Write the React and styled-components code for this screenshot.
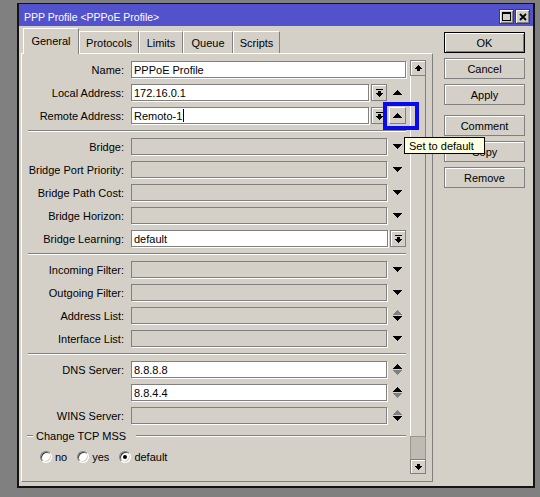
import React from 'react';
import styled, { createGlobalStyle } from 'styled-components';

const GlobalStyle = createGlobalStyle`
  html, body { margin: 0; padding: 0; background: #808080; }
  body { font-family: "Liberation Sans", Arial, sans-serif; font-size: 11px; color: #000; }
  * { box-sizing: border-box; }
`;

const Page = styled.div`
  width: 540px;
  height: 497px;
  padding: 3px 0 0 17px;
  background: #808080;
  overflow: hidden;
`;

const Window = styled.div`
  width: 518px;
  height: 485px;
  background: #d4d0c8;
  border: 2px solid #141414;
  border-top-width: 1px;
  display: flex;
  flex-direction: column;
`;

const TitleBar = styled.div`
  height: 22px;
  flex-shrink: 0;
  background: #5252cc;
  display: flex;
  align-items: center;
  justify-content: space-between;
  padding: 0 3px 0 5px;
`;

const TitleText = styled.span`
  color: #fff;
  font-size: 10.5px;
  margin-top: 3px;
`;

const TitleButtons = styled.div`
  display: flex;
  gap: 1px;
  margin-top: 3px;
`;

const TitleButton = styled.div`
  width: 15px;
  height: 15px;
  background: #d4d0c8;
  border: 1px solid #404040;
  box-shadow: inset 1px 1px 0 #fff, inset -1px -1px 0 #808080;
  display: flex;
  align-items: center;
  justify-content: center;
`;

const Body = styled.div`
  flex: 1;
  min-height: 0;
  display: flex;
  gap: 11px;
  padding: 0 8px 4px 2px;
`;

const LeftCol = styled.div`
  width: 412px;
  display: flex;
  flex-direction: column;
  padding-top: 2px;
`;

const TabRow = styled.div`
  height: 25px;
  flex-shrink: 0;
  display: flex;
  align-items: flex-end;
  padding-left: 2px;
`;

const Tab = styled.div`
  width: ${p => p.$w}px;
  height: ${p => (p.$active ? 26 : 22)}px;
  margin-bottom: ${p => (p.$active ? -1 : 0)}px;
  position: ${p => (p.$active ? 'relative' : 'static')};
  z-index: ${p => (p.$active ? 1 : 'auto')};
  background: #d4d0c8;
  border-top: 1px solid #fff;
  border-left: 1px solid #fff;
  border-right: 1px solid #808080;
  display: flex;
  align-items: center;
  justify-content: center;
  padding-bottom: ${p => (p.$active ? 2 : 0)}px;
  font-size: 11px;
  white-space: nowrap;
`;

const Panel = styled.div`
  flex: 1;
  min-height: 0;
  display: flex;
  border: 1px solid;
  border-color: #fff #808080 #808080 #fff;
  padding-right: 6px;
`;

const FormArea = styled.div`
  width: 385px;
  padding: 7px 1px 0 0;
  display: flex;
  flex-direction: column;
  gap: 6px;
`;

const Row = styled.div`
  display: grid;
  grid-template-columns: 102px 275px;
  column-gap: 7px;
  height: 17px;
  align-items: center;
`;

const Label = styled.div`
  text-align: right;
  white-space: nowrap;
  font-size: 11px;
`;

const Field = styled.div`
  display: flex;
  gap: 2px;
  height: 17px;
`;

const Input = styled.div`
  flex: 1;
  height: 17px;
  border: 1px solid #808080;
  box-shadow: 1px 1px 0 #fff;
  background: ${p => (p.$enabled ? '#fff' : '#d4d0c8')};
  padding-left: 2px;
  display: flex;
  align-items: center;
  font-size: 11px;
  white-space: nowrap;
  overflow: hidden;
`;

const Caret = styled.span`
  display: inline-block;
  width: 1px;
  height: 13px;
  background: #000;
  margin-left: 1px;
`;

const ComboButton = styled.div`
  width: 16px;
  height: 17px;
  flex-shrink: 0;
  background: #d4d0c8;
  border: 1px solid #808080;
  box-shadow: inset 1px 1px 0 #fff;
  display: flex;
  align-items: center;
  justify-content: center;
`;

const Slot = styled.div`
  width: 17px;
  height: 17px;
  flex-shrink: 0;
  position: relative;
  display: flex;
  flex-direction: column;
  align-items: center;
  justify-content: center;
  gap: 1px;
`;

const SlotButton = styled.div`
  width: 17px;
  height: 17px;
  background: #d4d0c8;
  border: 1px solid;
  border-color: #fff #808080 #808080 #fff;
  display: flex;
  align-items: center;
  justify-content: center;
`;

const Highlight = styled.div`
  position: absolute;
  left: -6px;
  top: -5px;
  width: 36px;
  height: 28px;
  border: 4px solid #0a0aef;
  pointer-events: none;
`;

const Tooltip = styled.div`
  position: absolute;
  left: 15px;
  top: 30px;
  width: 81px;
  height: 17px;
  z-index: 10;
  background: #ffffe1;
  border: 1px solid #000;
  padding-left: 4px;
  display: flex;
  align-items: center;
  font-size: 11px;
  white-space: nowrap;
`;

const Separator = styled.div`
  height: 2px;
  margin-left: 6px;
  border-top: 1px solid #808080;
  border-bottom: 1px solid #fff;
`;

const GroupTitle = styled.div`
  height: 12px;
  display: flex;
  align-items: center;
  padding-left: 5px;
`;

const GroupLine = styled.div`
  height: 2px;
  flex: ${p => (p.$grow ? 1 : 'none')};
  width: ${p => (p.$grow ? 'auto' : '6px')};
  border-top: 1px solid #808080;
  border-bottom: 1px solid #fff;
`;

const GroupText = styled.span`
  margin: 0 10px 0 3px;
  font-size: 11px;
  white-space: nowrap;
`;

const RadioRow = styled.div`
  display: flex;
  align-items: center;
  gap: 10px;
  height: 13px;
  margin-top: 2px;
  padding-left: 18px;
`;

const RadioItem = styled.label`
  display: flex;
  align-items: center;
  gap: 3px;
  font-size: 11px;
`;

const RadioCircle = styled.span`
  width: 12px;
  height: 12px;
  border-radius: 50%;
  background: #fff;
  border: 1px solid;
  border-color: #808080 #fff #fff #808080;
  box-shadow: inset 1px 1px 0 #404040, inset -1px -1px 0 #d4d0c8;
  display: flex;
  align-items: center;
  justify-content: center;
  &::after {
    content: '';
    display: ${p => (p.$checked ? 'block' : 'none')};
    width: 4px;
    height: 4px;
    border-radius: 50%;
    background: #000;
  }
`;

const Scrollbar = styled.div`
  width: 16px;
  margin: 6px 0 7px 3px;
  display: flex;
  flex-direction: column;
`;

const ScrollButton = styled.div`
  height: ${p => p.$h}px;
  flex-shrink: 0;
  background: #d4d0c8;
  border: 1px solid #808080;
  box-shadow: inset 1px 1px 0 #fff;
  display: flex;
  align-items: center;
  justify-content: center;
`;

const ScrollTrack = styled.div`
  flex: 1;
  border-left: 1px solid #fff;
  border-right: 1px solid #808080;
  display: flex;
  flex-direction: column;
  justify-content: flex-end;
`;

const ScrollThumb = styled.div`
  height: 23px;
  margin-left: -1px;
  margin-right: -1px;
  background: #bfbbb3;
  border: 1px solid #9a968f;
  border-bottom: none;
`;

const ButtonCol = styled.div`
  width: 81px;
  padding-top: 6px;
  display: flex;
  flex-direction: column;
  gap: 5px;
`;

const DialogButton = styled.div`
  height: 21px;
  margin-top: ${p => p.$extra || 0}px;
  background: #d4d0c8;
  border: 1px solid ${p => (p.$default ? '#000' : '#808080')};
  box-shadow: ${p => (p.$default ? 'inset 1px 1px 0 #fff, inset -1px -1px 0 #808080' : 'inset 1px 1px 0 #fff')};
  display: flex;
  align-items: center;
  justify-content: center;
  font-size: 11px;
`;

/* ---------- icons ---------- */

const PixelRows = ({ rows, width, color = '#000' }) => (
  <svg width={width} height={rows.length} viewBox={`0 0 ${width} ${rows.length}`} shapeRendering="crispEdges">
    {rows.map((w, i) =>
      w > 0 ? <rect key={i} x={(width - w) / 2} y={i} width={w} height="1" fill={color} /> : null
    )}
  </svg>
);

const Tri = ({ dir = 'down', color = '#000' }) => (
  <PixelRows width={9} color={color} rows={dir === 'up' ? [1, 3, 5, 7, 9] : [9, 7, 5, 3, 1]} />
);

const ComboIcon = () => <PixelRows width={7} rows={[7, 0, 3, 3, 7, 5, 3, 1]} />;
const ScrollUpIcon = () => <PixelRows width={7} rows={[1, 3, 5, 7, 3, 3]} />;
const ScrollDownIcon = () => <PixelRows width={7} rows={[3, 3, 7, 5, 3, 1]} />;

const MaxIcon = () => (
  <svg width="9" height="9" viewBox="0 0 9 9" shapeRendering="crispEdges">
    <rect x="0.5" y="0.5" width="8" height="8" fill="none" stroke="#000" />
    <rect x="0" y="0" width="9" height="2" fill="#000" />
  </svg>
);

const CloseIcon = () => (
  <svg width="8" height="8" viewBox="0 0 8 8">
    <path d="M1 1 L7 7 M7 1 L1 7" stroke="#000" strokeWidth="1.8" />
  </svg>
);

/* ---------- pieces ---------- */

const FormRow = ({ label, children }) => (
  <Row>
    <Label>{label}</Label>
    <Field>{children}</Field>
  </Row>
);

const Down = () => (
  <Slot>
    <Tri dir="down" />
  </Slot>
);

const Stack = ({ upActive }) => (
  <Slot>
    <Tri dir="up" color={upActive ? '#000' : '#808080'} />
    <Tri dir="down" color={upActive ? '#808080' : '#000'} />
  </Slot>
);

const tabs = [
  { name: 'General', w: 56, active: true },
  { name: 'Protocols', w: 60 },
  { name: 'Limits', w: 44 },
  { name: 'Queue', w: 50 },
  { name: 'Scripts', w: 47 },
];

export default function App() {
  return (
    <Page>
      <GlobalStyle />
      <Window>
        <TitleBar>
          <TitleText>PPP Profile &lt;PPPoE Profile&gt;</TitleText>
          <TitleButtons>
            <TitleButton><MaxIcon /></TitleButton>
            <TitleButton><CloseIcon /></TitleButton>
          </TitleButtons>
        </TitleBar>
        <Body>
          <LeftCol>
            <TabRow>
              {tabs.map(t => (
                <Tab key={t.name} $w={t.w} $active={t.active}>{t.name}</Tab>
              ))}
            </TabRow>
            <Panel>
              <FormArea>
                <FormRow label="Name:">
                  <Input $enabled>PPPoE Profile</Input>
                </FormRow>
                <FormRow label="Local Address:">
                  <Input $enabled>172.16.0.1</Input>
                  <ComboButton><ComboIcon /></ComboButton>
                  <Slot><Tri dir="up" /></Slot>
                </FormRow>
                <FormRow label="Remote Address:">
                  <Input $enabled>Remoto-1<Caret /></Input>
                  <ComboButton><ComboIcon /></ComboButton>
                  <Slot>
                    <SlotButton><Tri dir="up" /></SlotButton>
                    <Highlight />
                    <Tooltip>Set to default</Tooltip>
                  </Slot>
                </FormRow>
                <Separator />
                <FormRow label="Bridge:"><Input /><Down /></FormRow>
                <FormRow label="Bridge Port Priority:"><Input /><Down /></FormRow>
                <FormRow label="Bridge Path Cost:"><Input /><Down /></FormRow>
                <FormRow label="Bridge Horizon:"><Input /><Down /></FormRow>
                <FormRow label="Bridge Learning:">
                  <Input $enabled>default</Input>
                  <ComboButton><ComboIcon /></ComboButton>
                </FormRow>
                <Separator />
                <FormRow label="Incoming Filter:"><Input /><Down /></FormRow>
                <FormRow label="Outgoing Filter:"><Input /><Down /></FormRow>
                <FormRow label="Address List:"><Input /><Stack /></FormRow>
                <FormRow label="Interface List:"><Input /><Down /></FormRow>
                <Separator />
                <FormRow label="DNS Server:"><Input $enabled>8.8.8.8</Input><Stack upActive /></FormRow>
                <FormRow label=""><Input $enabled>8.8.4.4</Input><Stack upActive /></FormRow>
                <FormRow label="WINS Server:"><Input /><Stack /></FormRow>
                <GroupTitle>
                  <GroupLine />
                  <GroupText>Change TCP MSS</GroupText>
                  <GroupLine $grow />
                </GroupTitle>
                <RadioRow>
                  <RadioItem><RadioCircle />no</RadioItem>
                  <RadioItem><RadioCircle />yes</RadioItem>
                  <RadioItem><RadioCircle $checked />default</RadioItem>
                </RadioRow>
              </FormArea>
              <Scrollbar>
                <ScrollButton $h={16}><ScrollUpIcon /></ScrollButton>
                <ScrollTrack>
                  <ScrollThumb />
                </ScrollTrack>
                <ScrollButton $h={15}><ScrollDownIcon /></ScrollButton>
              </Scrollbar>
            </Panel>
          </LeftCol>
          <ButtonCol>
            <DialogButton $default>OK</DialogButton>
            <DialogButton>Cancel</DialogButton>
            <DialogButton>Apply</DialogButton>
            <DialogButton $extra={5}>Comment</DialogButton>
            <DialogButton>Copy</DialogButton>
            <DialogButton>Remove</DialogButton>
          </ButtonCol>
        </Body>
      </Window>
    </Page>
  );
}
